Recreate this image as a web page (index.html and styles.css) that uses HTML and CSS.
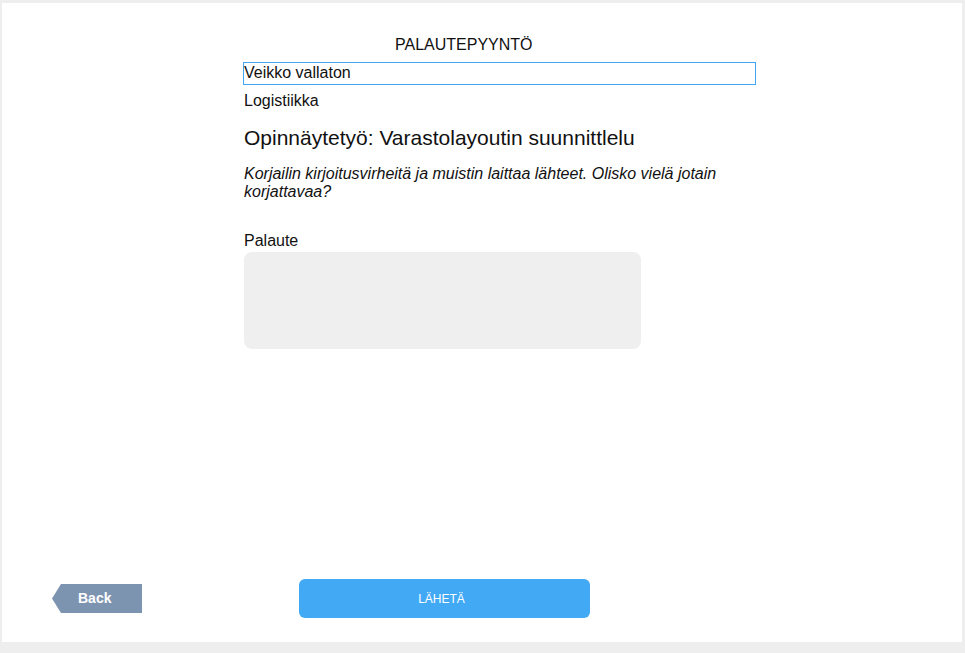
FILE: index.html
```html
<!DOCTYPE html>
<html lang="fi">
<head>
<meta charset="utf-8">
<title>Palautepyyntö</title>
<link rel="stylesheet" href="styles.css">
</head>
<body>
<div class="frame">
  <main class="content">
    <h1 class="title">PALAUTEPYYNTÖ</h1>
    <div class="name-field">Veikko vallaton</div>
    <div class="dept">Logistiikka</div>
    <h2 class="thesis">Opinnäytetyö: Varastolayoutin suunnittlelu</h2>
    <p class="message">Korjailin kirjoitusvirheitä ja muistin laittaa lähteet. Olisko vielä jotain korjattavaa?</p>
    <label class="label">Palaute</label>
    <div class="feedback"></div>
  </main>
  <footer class="actions">
    <div class="back">Back</div>
    <div class="send">LÄHETÄ</div>
  </footer>
</div>
</body>
</html>
```

FILE: styles.css
```css
html, body {
  margin: 0;
  padding: 0;
}
body {
  background: #eeeeee;
  font-family: "Liberation Sans", Arial, sans-serif;
  color: #111;
  width: 965px;
  height: 653px;
}
.frame {
  margin: 3px 0 0 2px;
  width: 960px;
  height: 639px;
  background: #fff;
  display: flex;
  flex-direction: column;
  justify-content: space-between;
}
.content {
  margin-left: 241px;
  width: 513px;
  padding-top: 32px;
  display: flex;
  flex-direction: column;
}
.title {
  margin: 0;
  font-size: 16px;
  font-weight: normal;
  line-height: 20px;
  padding-left: 152px;
}
.name-field {
  margin-top: 7px;
  height: 21px;
  border: 1px solid #42a5f5;
  font-size: 16px;
  line-height: 20px;
  padding-left: 0;
}
.dept {
  margin-top: 6px;
  padding-left: 1px;
  font-size: 16px;
  line-height: 20px;
}
.thesis {
  margin: 15px 0 0 0;
  padding-left: 1px;
  font-size: 21px;
  font-weight: normal;
  line-height: 24px;
}
.message {
  margin: 15px 0 0 0;
  padding-left: 1px;
  font-size: 16px;
  font-style: italic;
  line-height: 18px;
  width: 480px;
}
.label {
  margin-top: 30px;
  padding-left: 1px;
  font-size: 16px;
  line-height: 20px;
}
.feedback {
  margin-top: 1px;
  margin-left: 1px;
  width: 397px;
  height: 97px;
  background: #efefef;
  border-radius: 8px;
}
.actions {
  display: flex;
  align-items: center;
  padding: 0 0 24px 50px;
}
.back {
  width: 90px;
  height: 29px;
  background: #7d94b0;
  color: #fff;
  font-weight: bold;
  font-size: 14px;
  line-height: 29px;
  box-sizing: border-box;
  padding-left: 26px;
  clip-path: polygon(9px 0, 100% 0, 100% 100%, 9px 100%, 0 50%);
}
.send {
  margin-left: 157px;
  width: 291px;
  height: 39px;
  box-sizing: border-box;
  padding: 1px 6px 0 0;
  background: #42a9f5;
  border-radius: 6px;
  color: #fff;
  font-size: 12px;
  line-height: 39px;
  text-align: center;
}
```
